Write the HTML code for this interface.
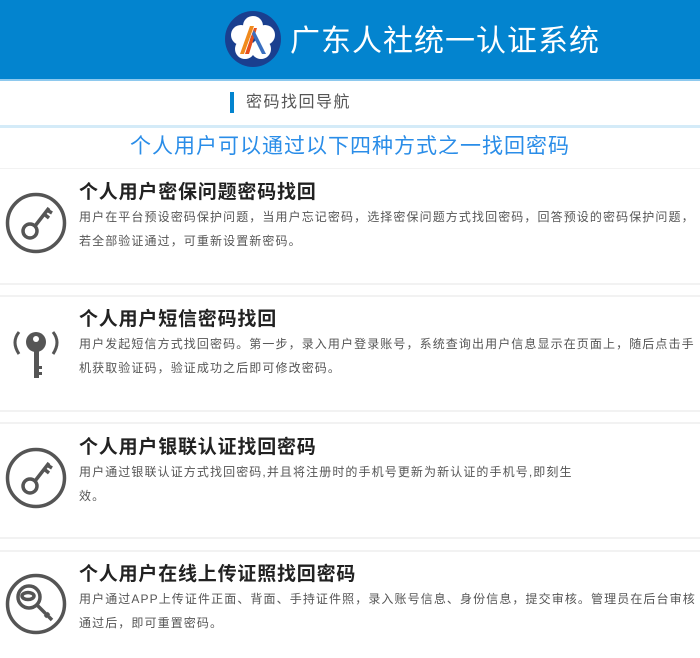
<!DOCTYPE html>
<html><head><meta charset="utf-8"><style>
*{margin:0;padding:0;box-sizing:border-box}
body{width:700px;height:658px;overflow:hidden;background:#fff;font-family:"Liberation Sans","Noto Sans CJK SC",sans-serif;position:relative}
.hdr{position:absolute;left:0;top:0;width:700px;height:79px;background:#0384cf}
.hdr .t{position:absolute;left:290px;top:16px;color:#fff;font-size:30px;letter-spacing:1px}
.l1{position:absolute;top:79px;left:0;width:700px;height:2px;background:#8ec9ee}
.nav{position:absolute;left:230px;top:92px;height:21px;border-left:4px solid #0384cf;padding-left:12px;font-size:16px;color:#555;line-height:21px;letter-spacing:1.5px}
.l2{position:absolute;top:125px;left:0;width:700px;height:3px;background:#d4ebf8}
.h{position:absolute;top:130px;left:0;width:700px;text-align:center;color:#2a8de8;font-size:21px;letter-spacing:1px}
.sep{position:absolute;left:0;width:700px;height:2px;background:#f2f2f2}
.c{position:absolute;left:79px;width:625px}
.c b{display:block;font-size:19px;color:#222;line-height:24px;letter-spacing:0.8px}
.c p{font-size:12px;color:#555;line-height:24px;white-space:nowrap;letter-spacing:1.1px}
.ic{position:absolute;left:5px}
</style></head><body>
<div class="hdr">
<svg style="position:absolute;left:224px;top:10px" width="58" height="58" viewBox="0 0 58 58">
<circle cx="29" cy="29" r="28" fill="#1a3f8f"/>
<g fill="#fff"><circle cx="29" cy="16" r="10"/><circle cx="17" cy="25" r="10"/><circle cx="41" cy="25" r="10"/><circle cx="21" cy="39" r="10"/><circle cx="37" cy="39" r="10"/></g>
<path d="M16 44 L26 16 L30 16 L20 44Z" fill="#f08a1c"/>
<path d="M21 44 L30 18 L33 18 L25 44Z" fill="#e8501c"/>
<path d="M30 20 L42 44 L38 44 L28 24Z" fill="#3a6fc0"/>
</svg>
<div class="t">广东人社统一认证系统</div>
</div>
<div class="l1"></div>
<div class="nav">密码找回导航</div>
<div class="l2"></div>
<div class="h">个人用户可以通过以下四种方式之一找回密码</div>
<div class="sep" style="top:168px;height:1px"></div>

<svg class="ic" style="top:192px" width="62" height="62" viewBox="0 0 62 62" fill="none" stroke="#555" stroke-width="3.5"><circle cx="31" cy="31" r="28.5"/><circle cx="25" cy="39" r="7"/><path d="M30 34 L44 16 M39 22 L44 26 M42 18 L47 21"/></svg>
<div class="c" style="top:181px"><b>个人用户密保问题密码找回</b><p>用户在平台预设密码保护问题，当用户忘记密码，选择密保问题方式找回密码，回答预设的密码保护问题，<br>若全部验证通过，可重新设置新密码。</p></div>
<div class="sep" style="top:283px"></div><div class="sep" style="top:295px"></div>

<svg class="ic" style="top:322px" width="62" height="62" viewBox="0 0 62 62" fill="#555"><circle cx="31" cy="20" r="10"/><rect x="29" y="26" width="5" height="30"/><rect x="33" y="44" width="4" height="3"/><rect x="33" y="50" width="4" height="3"/><circle cx="31" cy="17" r="3" fill="#fff"/><path d="M14 10 Q6 20 14 32" stroke="#555" stroke-width="3" fill="none"/><path d="M48 10 Q56 20 48 32" stroke="#555" stroke-width="3" fill="none"/></svg>
<div class="c" style="top:308px"><b>个人用户短信密码找回</b><p>用户发起短信方式找回密码。第一步，录入用户登录账号，系统查询出用户信息显示在页面上，随后点击手<br>机获取验证码，验证成功之后即可修改密码。</p></div>
<div class="sep" style="top:410px"></div><div class="sep" style="top:422px"></div>

<svg class="ic" style="top:447px" width="62" height="62" viewBox="0 0 62 62" fill="none" stroke="#555" stroke-width="3.5"><circle cx="31" cy="31" r="28.5"/><circle cx="25" cy="39" r="7"/><path d="M30 34 L44 16 M39 22 L44 26 M42 18 L47 21"/></svg>
<div class="c" style="top:436px"><b>个人用户银联认证找回密码</b><p>用户通过银联认证方式找回密码,并且将注册时的手机号更新为新认证的手机号,即刻生<br>效。</p></div>
<div class="sep" style="top:537px"></div><div class="sep" style="top:550px"></div>

<svg class="ic" style="top:573px" width="62" height="62" viewBox="0 0 62 62" fill="none" stroke="#555" stroke-width="3.5"><circle cx="31" cy="31" r="28.5"/><circle cx="24" cy="24" r="11"/><ellipse cx="23" cy="23" rx="6" ry="3.5"/><path d="M32 32 L47 47 M44 40 L40 44"/></svg>
<div class="c" style="top:563px"><b>个人用户在线上传证照找回密码</b><p>用户通过APP上传证件正面、背面、手持证件照，录入账号信息、身份信息，提交审核。管理员在后台审核<br>通过后，即可重置密码。</p></div>
</body></html>
